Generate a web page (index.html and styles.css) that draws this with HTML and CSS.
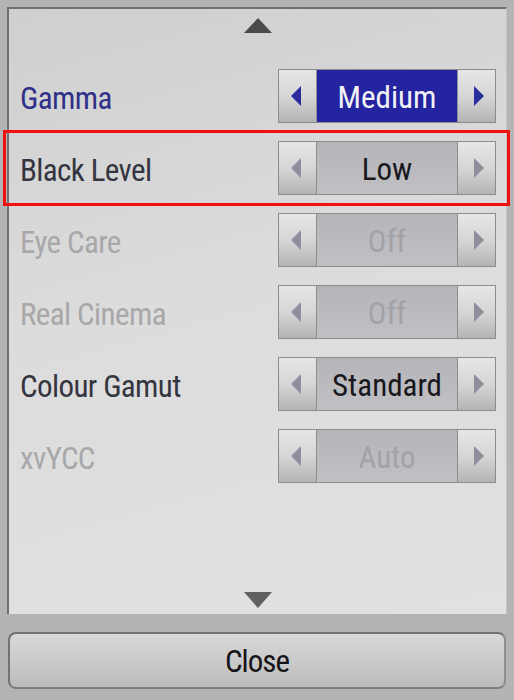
FILE: index.html
```html
<!DOCTYPE html>
<html lang="en">
<head>
<meta charset="UTF-8" />
<meta name="viewport" content="width=device-width, initial-scale=1" />
<title>Picture Settings</title>
<link rel="stylesheet" href="styles.css">
</head>
<body>
<div class="panel">
  <div class="scroll-arrow up"></div>

  <div class="rows">
    <div class="row focused">
      <span class="label">Gamma</span>
      <div class="stepper">
        <span class="step prev"></span>
        <span class="value">Medium</span>
        <span class="step next"></span>
      </div>
    </div>

    <div class="row selected">
      <span class="label">Black Level</span>
      <div class="stepper">
        <span class="step prev"></span>
        <span class="value">Low</span>
        <span class="step next"></span>
      </div>
    </div>

    <div class="row disabled">
      <span class="label">Eye Care</span>
      <div class="stepper">
        <span class="step prev"></span>
        <span class="value">Off</span>
        <span class="step next"></span>
      </div>
    </div>

    <div class="row disabled">
      <span class="label">Real Cinema</span>
      <div class="stepper">
        <span class="step prev"></span>
        <span class="value">Off</span>
        <span class="step next"></span>
      </div>
    </div>

    <div class="row">
      <span class="label">Colour Gamut</span>
      <div class="stepper">
        <span class="step prev"></span>
        <span class="value">Standard</span>
        <span class="step next"></span>
      </div>
    </div>

    <div class="row disabled">
      <span class="label">xvYCC</span>
      <div class="stepper">
        <span class="step prev"></span>
        <span class="value">Auto</span>
        <span class="step next"></span>
      </div>
    </div>
  </div>

  <div class="scroll-arrow down"></div>
</div>

<button class="close-btn">Close</button>
</body>
</html>
```

FILE: styles.css
```css
* {
  box-sizing: border-box;
}
body {
  margin: 0;
  width: 514px;
  height: 700px;
  padding: 7px 7px 0 7px;
  background: #b4b4b6;
  font-family: 'Liberation Sans Narrow', 'Roboto Condensed', 'Liberation Sans', sans-serif;
  overflow: hidden;
}
.panel {
  display: flex;
  flex-direction: column;
  height: 607px;
  border-top: 2px solid #707072;
  border-left: 2px solid #707072;
  border-right: 1px solid #c4c4c6;
  background: linear-gradient(165deg, #cfcfd0 0%, #dcdcdc 45%, #e1e1e1 100%);
  padding: 0 10px 0 11px;
}
.scroll-arrow {
  align-self: center;
  width: 0;
  height: 0;
  border-left: 14px solid transparent;
  border-right: 14px solid transparent;
}
.scroll-arrow.up {
  margin-top: 9px;
  margin-bottom: 27px;
  border-bottom: 15px solid #4a4a4c;
}
.scroll-arrow.down {
  margin-top: auto;
  margin-bottom: 6px;
  border-top: 16px solid #606062;
}
.rows {
  display: flex;
  flex-direction: column;
}
.row {
  position: relative;
  display: flex;
  align-items: center;
  justify-content: space-between;
  height: 72px;
}
.label {
  font-size: 31px;
  letter-spacing: -0.6px;
  color: #34353f;
  padding-top: 4px;
}
.focused .label {
  color: #2f3089;
}
.disabled .label {
  color: #a8a8aa;
}
.selected::after {
  content: "";
  position: absolute;
  left: -17px;
  right: -14px;
  top: -2px;
  bottom: -2px;
  border: 3px solid #f01010;
}

.stepper {
  display: flex;
  width: 218px;
  height: 54px;
  border: 1px solid #8c8c90;
}
.step {
  display: flex;
  align-items: center;
  justify-content: center;
  width: 38px;
  background: linear-gradient(180deg, #e6e6e6 0%, #d6d6d6 50%, #b4b4b6 100%);
}
.step.prev {
  border-right: 1px solid #8c8c90;
}
.step.next {
  border-left: 1px solid #8c8c90;
}
.step::before {
  content: "";
  width: 0;
  height: 0;
  border-top: 10px solid transparent;
  border-bottom: 10px solid transparent;
}
.step.prev::before {
  border-right: 10px solid #8e8e9c;
  margin-right: 4px;
}
.step.next::before {
  border-left: 10px solid #8e8e9c;
  margin-left: 4px;
}
.focused .step.prev::before {
  border-right-color: #2b2ba0;
}
.focused .step.next::before {
  border-left-color: #2b2ba0;
}
.value {
  flex: 1;
  display: flex;
  align-items: center;
  justify-content: center;
  font-size: 31px;
  color: #18181c;
  padding-top: 3px;
  background: linear-gradient(180deg, #b4b4b9 0%, #bcbcc0 60%, #c0c0c3 100%);
}
.focused .value {
  background: #2424a0;
  color: #f2f2f4;
}
.disabled .value {
  color: #a2a2a6;
}

.close-btn {
  display: block;
  width: 498px;
  height: 57px;
  margin: 18px 0 0 1px;
  border: 2px solid #727274;
  border-right-color: #8e8e90;
  border-bottom-color: #7e7e80;
  border-radius: 8px;
  background: linear-gradient(180deg, #d8d8d8 0%, #cacaca 50%, #bcbcbd 100%);
  font-family: inherit;
  font-size: 31px;
  letter-spacing: -1px;
  color: #151518;
  padding-top: 3px;
}
```
